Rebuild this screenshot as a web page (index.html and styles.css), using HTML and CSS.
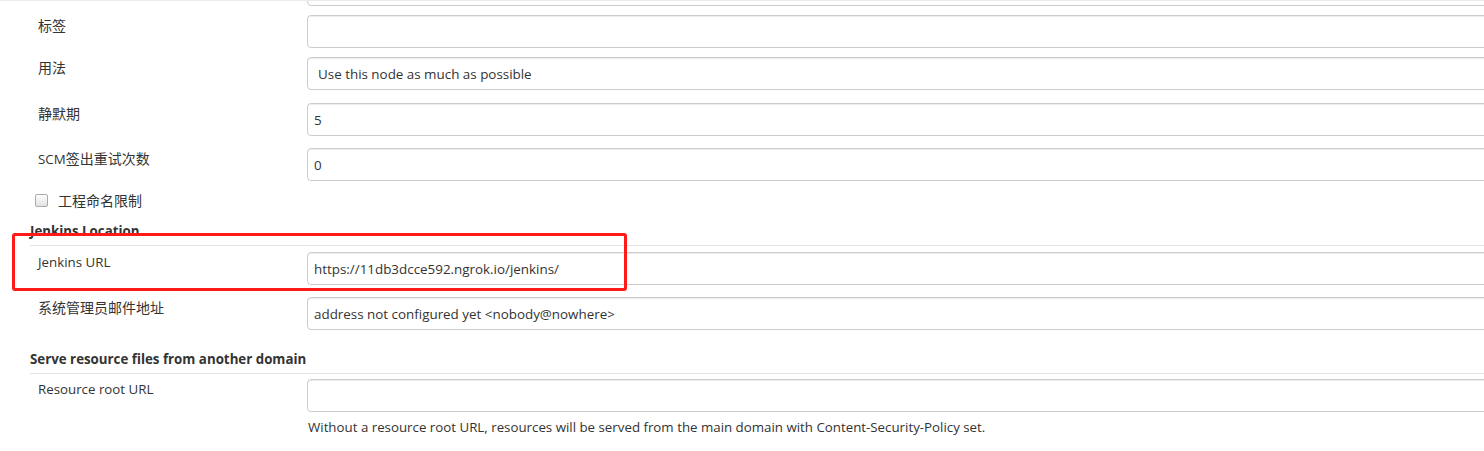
FILE: index.html
```html
<!DOCTYPE html>
<html lang="zh">
<head>
<meta charset="utf-8">
<title>Jenkins 系统配置</title>
<link rel="stylesheet" href="styles.css">
</head>
<body>
<div class="page">
  <div class="row row-cut">
    <div class="label"></div>
    <div class="field"><div class="input"></div></div>
  </div>
  <div class="row r-tag">
    <div class="label"><span class="zh">标签</span></div>
    <div class="field"><div class="input"></div></div>
  </div>
  <div class="row r-usage">
    <div class="label"><span class="zh">用法</span></div>
    <div class="field"><div class="input select">Use this node as much as possible</div></div>
  </div>
  <div class="row r-quiet">
    <div class="label"><span class="zh">静默期</span></div>
    <div class="field"><div class="input">5</div></div>
  </div>
  <div class="row r-scm">
    <div class="label">SCM<span class="zh">签出重试次数</span></div>
    <div class="field"><div class="input">0</div></div>
  </div>
  <div class="check-row">
    <span class="checkbox"></span>
    <span class="check-label zh">工程命名限制</span>
  </div>
  <div class="section">Jenkins Location</div>
  <div class="row r-url">
    <div class="label">Jenkins URL</div>
    <div class="field"><div class="input">https://11db3dcce592.ngrok.io/jenkins/</div></div>
  </div>
  <div class="row r-mail">
    <div class="label"><span class="zh">系统管理员邮件地址</span></div>
    <div class="field"><div class="input">address not configured yet &lt;nobody@nowhere&gt;</div></div>
  </div>
  <div class="section section-serve">Serve resource files from another domain</div>
  <div class="row r-res">
    <div class="label">Resource root URL</div>
    <div class="field"><div class="input"></div></div>
  </div>
  <div class="help">Without a resource root URL, resources will be served from the main domain with Content-Security-Policy set.</div>

  <div class="highlight"></div>
</div>
</body>
</html>
```

FILE: styles.css
```css
html, body {
  margin: 0;
  padding: 0;
  background: #fff;
  overflow: hidden;
}
body {
  font-family: "Open Sans", "Noto Sans CJK SC", sans-serif;
  font-size: 13.3px;
  color: #333;
  width: 1484px;
  height: 451px;
  border-top: 1px solid #ececec;
  box-sizing: border-box;
}
.page {
  position: relative;
  display: flow-root;
  width: 1484px;
}
.zh {
  font-family: "Noto Sans CJK SC", sans-serif;
  font-size: 14px;
}
.row {
  display: grid;
  grid-template-columns: 307px 1300px;
  align-items: start;
}
.label {
  padding-left: 38px;
  padding-top: 0;
  line-height: 20px;
  color: #333;
  white-space: nowrap;
}
.input {
  box-sizing: border-box;
  height: 33px;
  border: 1px solid #ccc;
  border-radius: 4px;
  box-shadow: inset 0 1px 1px rgba(0,0,0,0.075);
  padding: 0 6px;
  display: flex;
  align-items: center;
  font-size: 13.4px;
  color: #333;
  background: #fff;
}
.input.select { padding-left: 10px; }
.url-text { letter-spacing: 0.3px; }
.row-cut { margin-top: -28px; }
.r-tag { margin-top: 9px; }
.r-usage { margin-top: 9px; }
.r-quiet { margin-top: 13px; }
.r-scm { margin-top: 12px; }
.check-row {
  display: flex;
  align-items: center;
  margin-top: 10px;
  padding-left: 35px;
  height: 18px;
}
.checkbox {
  width: 11px;
  height: 11px;
  border: 1px solid #aaa;
  border-radius: 2px;
  background: linear-gradient(#fdfdfd, #e3e3e3);
}
.check-label {
  margin-left: 10px;
}
.section {
  margin: 13px 0 0 30px;
  font-weight: bold;
  line-height: 18px;
  padding-bottom: 5px;
  border-bottom: 1px solid #e2e2e2;
}
.r-url { margin-top: 6px; }
.r-mail { margin-top: 12px; }
.section-serve { margin-top: 20px; }
.r-res { margin-top: 5px; }
.help {
  margin: 6px 0 0 308px;
  line-height: 18px;
}
.highlight {
  position: absolute;
  left: 12px;
  top: 232px;
  width: 609px;
  height: 52px;
  border: 3px solid #ff1a1a;
  border-radius: 3px;
}
```
